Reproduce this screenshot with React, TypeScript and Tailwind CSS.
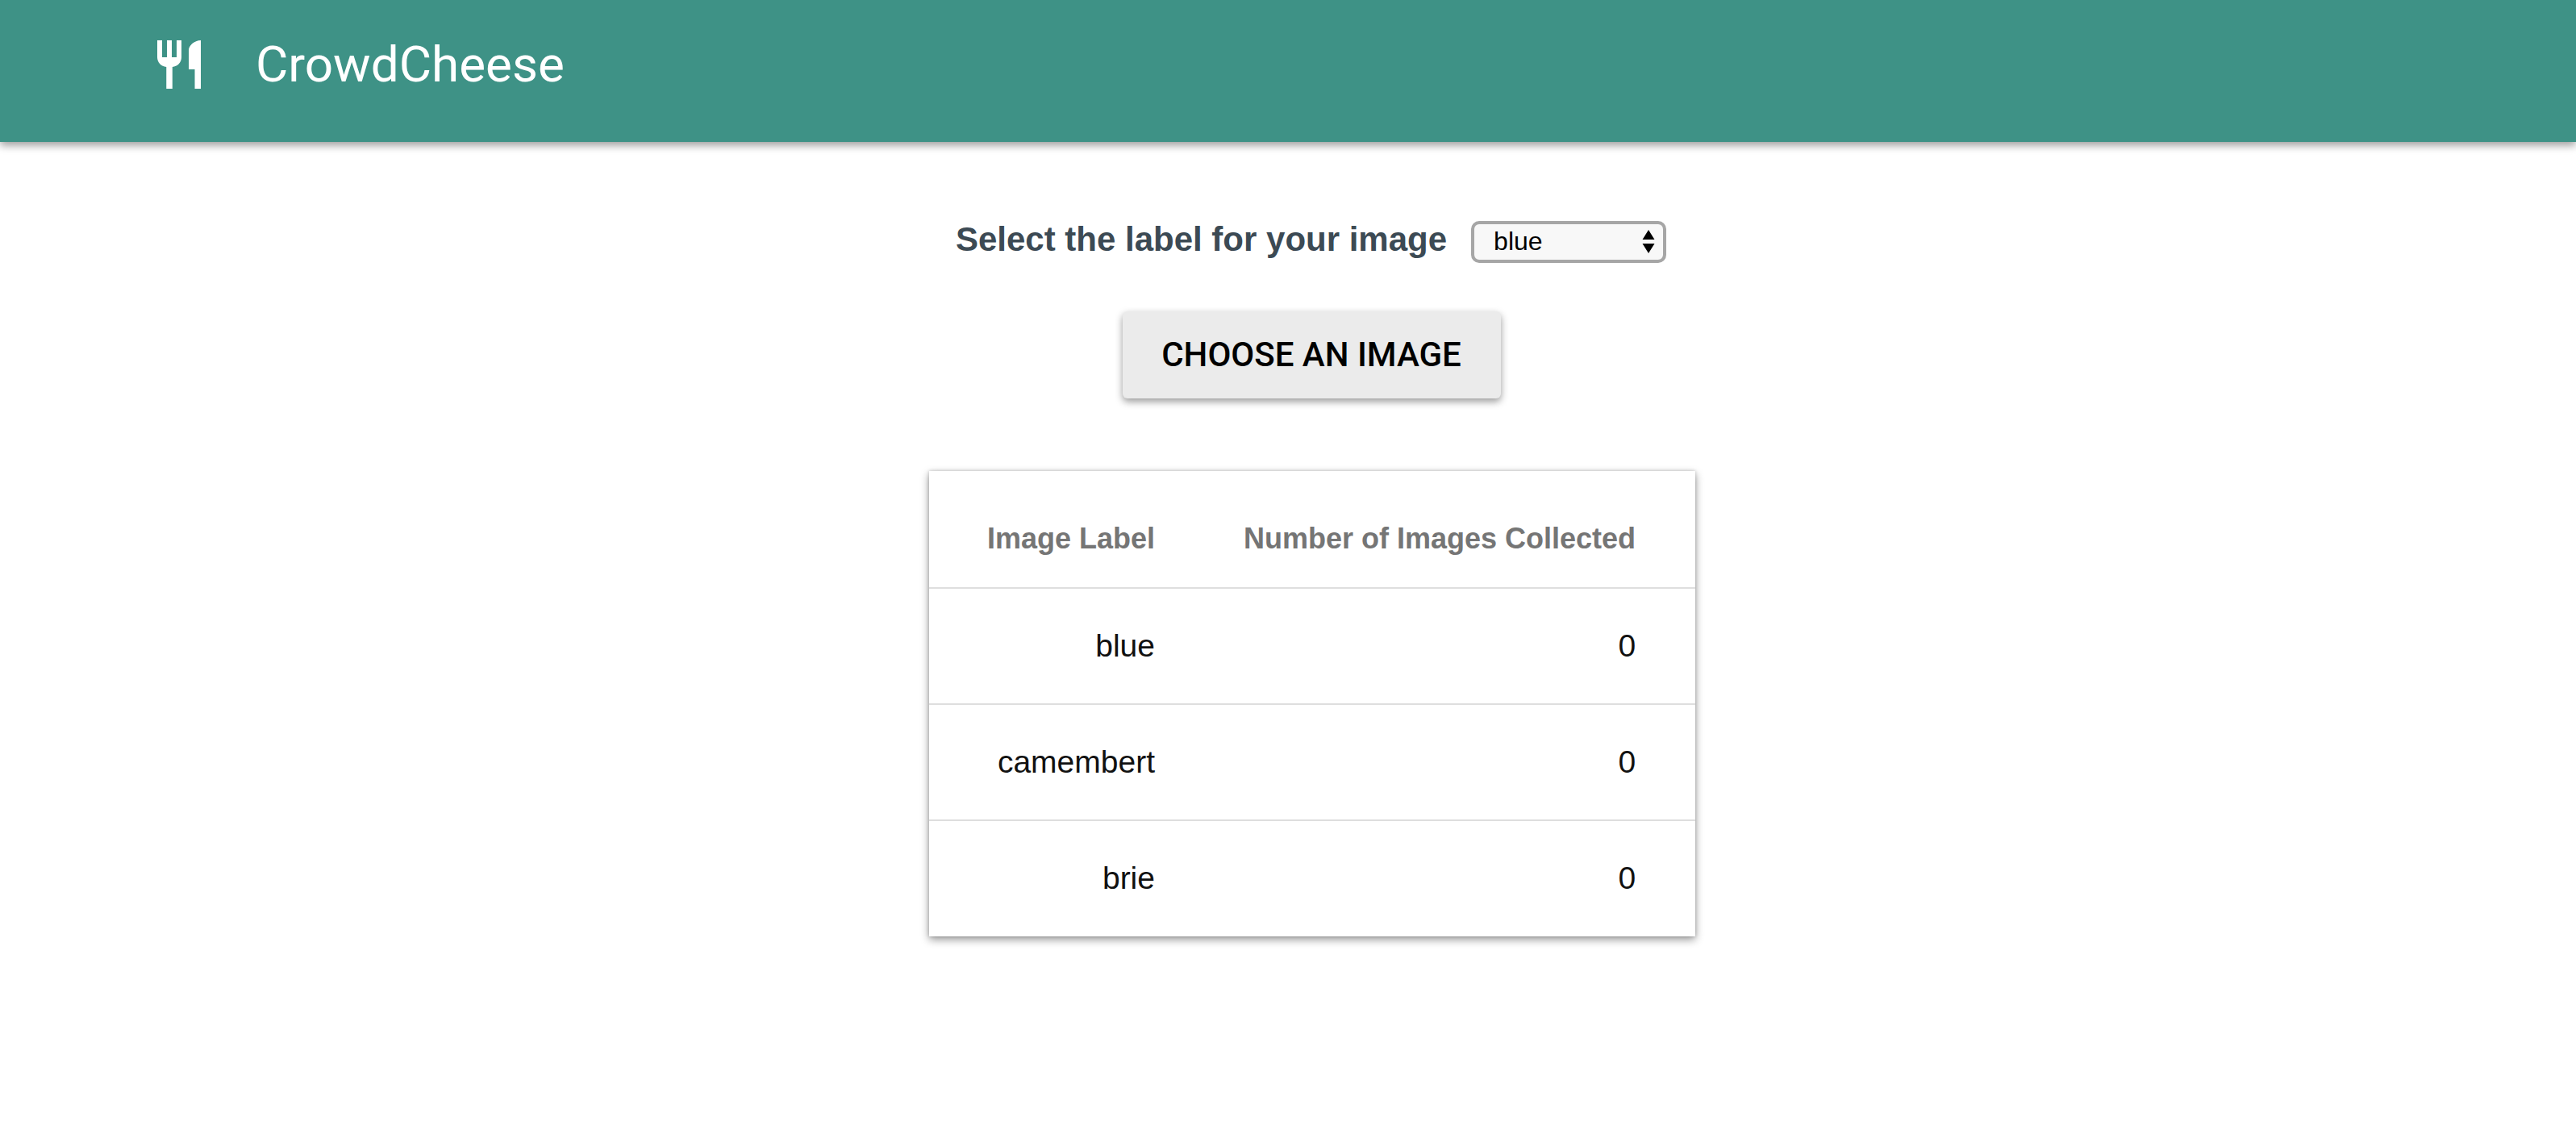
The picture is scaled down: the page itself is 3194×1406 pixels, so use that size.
const rows = [
  { label: "blue", count: 0 },
  { label: "camembert", count: 0 },
  { label: "brie", count: 0 },
];

function RestaurantIcon() {
  return (
    <svg width="72" height="72" viewBox="0 0 24 24" fill="#ffffff" className="shrink-0">
      <path d="M11 9H9V2H7v7H5V2H3v7c0 2.12 1.66 3.84 3.75 3.97V22h2.5v-9.03C11.34 12.84 13 11.12 13 9V2h-2v7zm5-3v8h2.5v8H21V2c-2.76 0-5 2.24-5 4z" />
    </svg>
  );
}

export default function App() {
  return (
    <div className="min-h-[1406px] bg-white font-['Liberation_Sans',Arial,sans-serif]">
      <header className="flex h-[176px] items-start bg-[#3e9286] pl-[186px] pt-[44px] shadow-[0_4px_10px_rgba(0,0,0,0.4)]">
        <RestaurantIcon />
        <h1 className="ml-[59px] mt-[1px] font-['Roboto',sans-serif] text-[62px] leading-[70px] font-normal text-white">
          CrowdCheese
        </h1>
      </header>

      <main className="flex flex-col items-center pl-[58px]">
        <div className="mt-[98px] mr-[1px] flex h-[52px] items-center">
          <label className="-mt-[6px] text-[42px] leading-[52px] font-bold text-[#3c4a54]">
            Select the label for your image
          </label>
          <div className="relative ml-[30px] h-[52px] w-[242px]">
            <select
              defaultValue="blue"
              className="h-full w-full appearance-none rounded-[10px] border-4 border-[#a6a6a6] bg-[#f8f8f8] pl-[24px] pb-[2px] text-[32px] leading-[40px] text-black outline-none"
            >
              {rows.map((r) => (
                <option key={r.label}>{r.label}</option>
              ))}
            </select>
            <svg width="16" height="29" viewBox="0 0 16 29" fill="#000000" className="pointer-events-none absolute right-[14px] top-[11px]">
              <path d="M8 0l7.500 12H.5zM8 29L.5 17h15z" />
            </svg>
          </div>
        </div>

        <button className="mt-[60px] h-[108px] w-[469px] rounded-[6px] bg-[#ebebeb] pb-[2px] font-['Roboto',sans-serif] text-[42px] font-medium text-black shadow-[0_4px_10px_rgba(0,0,0,0.4)]">
          CHOOSE AN IMAGE
        </button>

        <table className="mt-[90px] ml-[2px] w-[950px] border-collapse bg-white shadow-[0_4px_10px_rgba(0,0,0,0.4),0_0_4px_rgba(0,0,0,0.2)]">
          <thead>
            <tr className="h-[145px] border-b-2 border-[#dedede]">
              <th className="pl-[72px] pt-[24px] text-right text-[36px] font-bold whitespace-nowrap text-[#757575]">Image Label</th>
              <th className="pl-[110px] pr-[74px] pt-[24px] text-right text-[36px] font-bold whitespace-nowrap text-[#757575]">Number of Images Collected</th>
            </tr>
          </thead>
          <tbody>
            {rows.map((r, i) => (
              <tr key={r.label} className={i < rows.length - 1 ? "h-[144px] border-b-2 border-[#dedede]" : "h-[144px]"}>
                <td className="pl-[72px] text-right text-[39px] text-[#111111]">{r.label}</td>
                <td className="pl-[110px] pr-[74px] text-right text-[39px] text-[#111111]">{r.count}</td>
              </tr>
            ))}
          </tbody>
        </table>
      </main>
    </div>
  );
}
